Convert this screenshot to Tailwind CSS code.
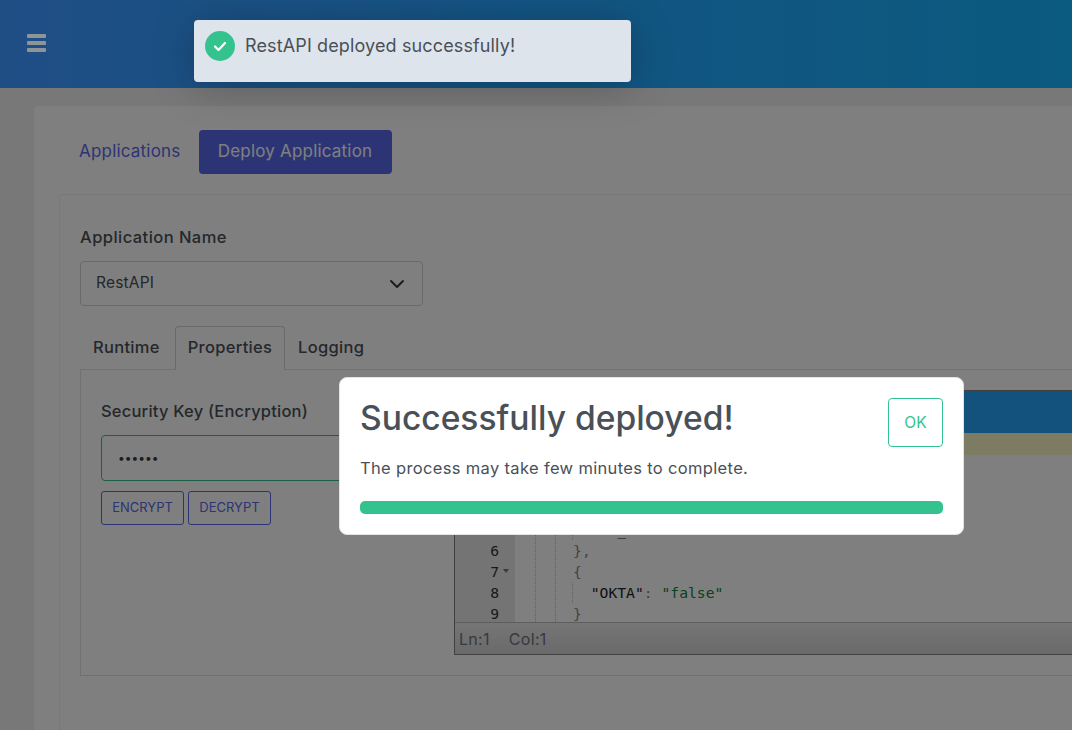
<!DOCTYPE html>
<html lang="en">
<head>
  <meta charset="UTF-8" />
  <title>Deploy Application</title>
  <script src="https://cdn.jsdelivr.net/npm/@tailwindcss/browser@4"></script>
</head>
<body class="font-['Inter','Noto_Sans',sans-serif] text-[#495057]">
  <div class="relative w-[1072px] h-[730px] overflow-hidden bg-[#f0f0f0]">

    <!-- Header -->
    <header class="h-[88px] bg-gradient-to-r from-[#1f4e85] via-[#135584] to-[#0b5a7f] flex items-center pl-[27px] pb-[2px]">
      <div class="w-[19px] flex flex-col gap-[3px]">
        <span class="block h-[4px] rounded-[1px] bg-[#8f9498]"></span>
        <span class="block h-[4px] rounded-[1px] bg-[#8f9498]"></span>
        <span class="block h-[4px] rounded-[1px] bg-[#8f9498]"></span>
      </div>
    </header>

    <!-- Page content -->
    <main class="relative h-[642px] pl-[34px] pt-[18px]">
      <div class="w-[1100px] h-[640px] bg-white rounded-t-[4px] px-[25px] pt-[24px]">
        <nav class="flex items-center h-[44px] gap-[18px] text-[17px] tracking-[0.2px]">
          <a class="pl-[20px] text-[#5869ea]">Applications</a>
          <a class="h-[44px] w-[193px] rounded-[4px] bg-[#5869ea] text-white flex items-center justify-center">Deploy Application</a>
        </nav>

        <section class="mt-[20px] border border-[#eff0f2] rounded-t-[3px] h-[560px] pl-[20px] pt-[30px]">
          <label class="block h-[24px] leading-[24px] text-[16.5px] tracking-[0.45px] font-medium">Application Name</label>
          <div class="mt-[12px] w-[343px] h-[45px] border border-[#ced4da] rounded-[4px] flex items-center justify-between pl-[15px] pr-[17px] pb-[2px] text-[15.5px] tracking-[0.2px]">
            <span>RestAPI</span>
            <svg class="mt-[2px]" width="16" height="10" viewBox="0 0 16 10" fill="none" stroke="#343a40" stroke-width="2" stroke-linecap="round" stroke-linejoin="round"><path d="M2 2l6 6 6-6"/></svg>
          </div>

          <div class="mt-[20px] flex h-[44px] pb-[2px] text-[16.5px] tracking-[0.3px] font-medium relative z-10">
            <span class="w-[95px] pl-[13px] flex items-center">Runtime</span>
            <span class="w-[110px] h-[44px] pb-[2px] flex items-center justify-center bg-white border border-[#ced4da] border-b-white rounded-t-[4px]">Properties</span>
            <span class="pl-[13px] flex items-center">Logging</span>
          </div>

          <div class="-mt-[1px] w-[1020px] h-[307px] border border-[#dee2e6] flex pl-[20px]">
            <div class="w-[353px] shrink-0 pt-[29px]">
              <label class="block h-[24px] leading-[24px] text-[16.5px] tracking-[0.2px] font-medium">Security Key (Encryption)</label>
              <div class="mt-[12px] w-[333px] h-[46px] border border-[#34c38f] rounded-[4px] flex items-center pl-[16px] text-[12px] text-[#343a40]">••••••</div>
              <div class="mt-[10px] flex gap-[4px] text-[13px]">
                <button class="w-[83px] h-[34px] border border-[#5869ea] rounded-[3px] text-[#5869ea]">ENCRYPT</button>
                <button class="w-[83px] h-[34px] border border-[#5869ea] rounded-[3px] text-[#5869ea]">DECRYPT</button>
              </div>
            </div>

            <!-- Code editor -->
            <div class="mt-[20px] w-[640px] shrink-0 h-[265px] border border-[#808080] flex flex-col">
              <div class="h-[42px] bg-[#24a4fa]"></div>
              <div class="relative flex-1 overflow-hidden font-['DejaVu_Sans_Mono',monospace] text-[14.7px] leading-[21px] text-[#222] bg-white">
                <div class="absolute left-0 top-0 w-full h-[22px] bg-[#fcf6c6]"></div>
                <div class="absolute left-0 top-0 w-[60px] h-full bg-[#e8e8e8]"></div>
                <div class="absolute left-[80px] top-0 h-full border-l border-dotted border-[#c4c4c4]"></div>
                <div class="absolute left-[100px] top-0 h-full border-l border-dotted border-[#c4c4c4]"></div>
                <div class="absolute left-[117px] top-[86px] h-[21px] border-l border-dotted border-[#c4c4c4]"></div>
                <div class="absolute left-[117px] top-[149px] h-[21px] border-l border-dotted border-[#c4c4c4]"></div>
                <div class="relative flex pt-[2px]">
                  <div class="w-[60px] pr-[16px] text-right text-[#333]">
                    <div>1</div><div>2</div><div>3</div><div>4</div><div>5</div><div>6</div>
                    <div class="relative">7<span class="absolute left-[48px] top-[8px] w-0 h-0 border-x-[3px] border-x-transparent border-t-[4px] border-t-[#777]"></span></div>
                    <div>8</div><div>9</div>
                  </div>
                  <pre class="pl-[5px] font-['DejaVu_Sans_Mono',monospace] text-[14.7px] leading-[21px]">[
  {
    "config": [
      {
        "DB_PORT": "8080"
<span class="text-[#888]">      },</span>
<span class="text-[#888]">      {</span>
        "OKTA"<span class="text-[#888]">:</span> <span class="text-[#14803c]">"false"</span>
<span class="text-[#888]">      }</span></pre>
                </div>
              </div>
              <div class="h-[32px] bg-gradient-to-b from-[#ececec] to-[#d4d4d4] border-t border-[#bdbdbd] flex items-center pl-[4px] gap-[19px] text-[16px] tracking-[0.3px] text-[#6c757d]">
                <span>Ln:1</span><span>Col:1</span>
              </div>
            </div>
          </div>
        </section>
      </div>
      <!-- backdrop -->
      <div class="absolute inset-0 z-20 bg-black/50"></div>
    </main>

    <!-- Toast -->
    <div class="absolute z-30 left-[194px] top-[20px] w-[437px] h-[62px] bg-[#dee4ec] rounded-[4px] shadow-[0_4px_40px_rgba(0,0,0,0.25)] flex items-start pl-[11px] pt-[11px] gap-[10px]">
      <span class="w-[30px] h-[30px] rounded-full bg-[#34c38f] flex items-center justify-center">
        <svg width="14" height="11" viewBox="0 0 14 11" fill="none" stroke="#fff" stroke-width="2.2" stroke-linecap="round" stroke-linejoin="round"><path d="M2 5.5l3.5 3.5L12 2"/></svg>
      </span>
      <span class="h-[30px] leading-[30px] text-[18px] tracking-[0.13px]">RestAPI deployed successfully!</span>
    </div>

    <!-- Modal -->
    <div class="absolute z-30 left-[339px] top-[377px] w-[625px] h-[158px] bg-white rounded-[8px] border border-[#e3e3e3] pl-[20px] pr-[20px] pt-[20px]">
      <div class="flex justify-between items-start">
        <h2 class="text-[33.6px] leading-[38px] font-medium mt-[1px]">Successfully deployed!</h2>
        <button class="w-[55px] h-[49px] border border-[#34c38f] rounded-[4px] text-[#34c38f] text-[15.5px]">OK</button>
      </div>
      <p class="mt-[10px] text-[16.5px] tracking-[0.34px] leading-[22px]">The process may take few minutes to complete.</p>
      <div class="mt-[22px] h-[13px] rounded-[5px] bg-[#34c38f]"></div>
    </div>
  </div>
</body>
</html>
